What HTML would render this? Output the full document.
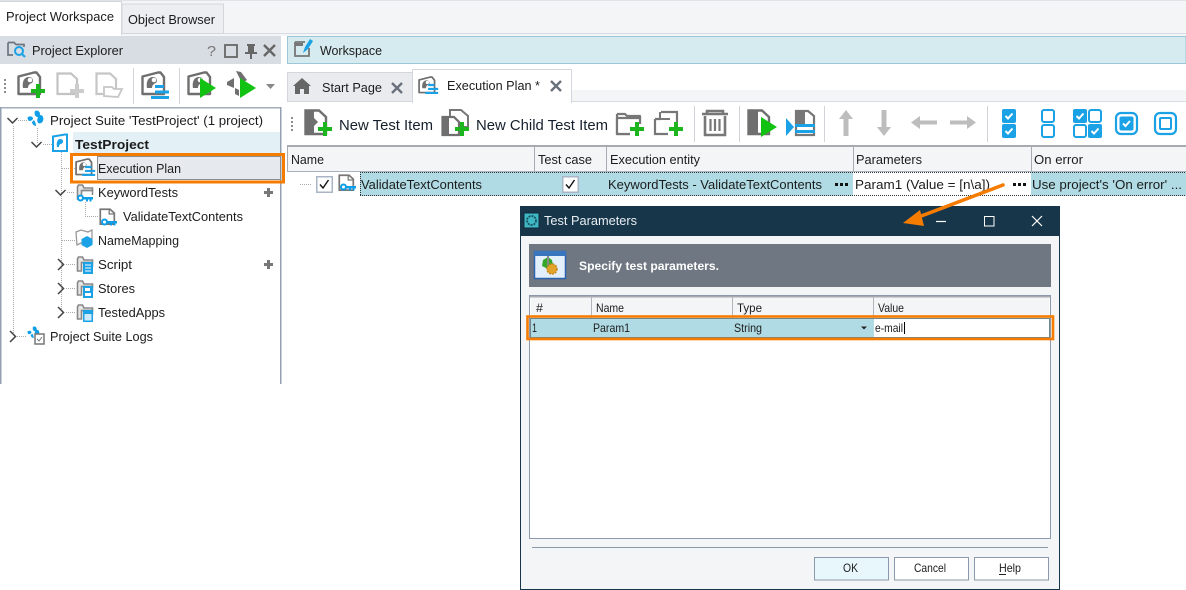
<!DOCTYPE html>
<html lang="en"><head><meta charset="utf-8"><title>Project Workspace</title>
<style>
html,body{margin:0;padding:0;background:#fff;width:1186px;height:590px;overflow:hidden}
svg{display:block}
text{font-family:"Liberation Sans",sans-serif;font-size:13px;fill:#1c1c1c}
.b{font-weight:bold}
.s{font-size:12px}
.big{font-size:15px;fill:#15202c}
</style></head><body>
<svg width="1186" height="590" viewBox="0 0 1186 590" xmlns="http://www.w3.org/2000/svg">
<defs>
<g id="plus"><path d="M5 0h4v5h5v4H9v5H5V9H0V5h5z" fill="#1db51d"/></g>
<g id="gplus"><path d="M5 0h4v5h5v4H9v5H5V9H0V5h5z" fill="#9b9b9b"/></g>
<g id="base"><path d="M1.500 5.500L17 1.500H19.500L23 6V23H1.500Z" fill="#fff" stroke="#6f6f6f" stroke-width="2.400" stroke-linejoin="round"/><path d="M6 17c-1-6 1-11 6-11 4 0 5 4 3 6-3 1-4 3-4 5z" fill="#6f6f6f"/><circle cx="13" cy="9" r="2.300" fill="#fff"/></g>
<g id="pg"><path d="M0 0L16 10L0 20Z" fill="#12c212"/></g>
<g id="bars"><path d="M4 0h9v3H4zM4 5.500h14v3H4zM0 11h18v3H0z" fill="#1ba1e6"/></g>
<g id="doc"><path d="M1.500 1.500H13L18 6V19H1.500Z" fill="#fff" stroke="#777" stroke-width="2"/><path d="M12 1v6h6" fill="none" stroke="#777" stroke-width="1.500"/></g>
<g id="folder"><path d="M1.500 4V16H5.500V7.500H16.500V5H8L6.500 2H2.500Z" fill="#e6e6e6" stroke="#888" stroke-width="1.600"/><path d="M5.500 7.500H16.500V12" fill="none" stroke="#888" stroke-width="1.500"/></g>
<g id="key"><circle cx="3.500" cy="4" r="2.500" fill="#fff" stroke="#0c9ee8" stroke-width="2"/><path d="M6 3h10v2.500h-1.500v2h-2v-2h-1.500v2h-2v-2H6z" fill="#0c9ee8"/></g>
<g id="chk"><rect x=".75" y=".75" width="15.500" height="15.500" fill="#fff" stroke="#aab6c6" stroke-width="1.500"/><path d="M4 8.500L7 12L12.500 4" fill="none" stroke="#111" stroke-width="1.400"/></g>
<g id="bc"><rect width="14" height="14" rx="2" fill="#1ba1e6"/><path d="M3.500 7L6 9.500L10.500 4.500" fill="none" stroke="#fff" stroke-width="2"/></g>
<g id="be"><rect x="1" y="1" width="12" height="12" rx="2" fill="#fff" stroke="#1ba1e6" stroke-width="2"/></g>
<g id="dots"><path d="M0 0h3v3H0zM5 0h3v3H5zM10 0h3v3h-3z" fill="#111"/></g>
<g id="suite"><path d="M8 1c2-1 5 0 5 3 0 2-1 3-3 3-2-1-3-3-2-6zM1 7c2-1 4-1 5 1 0 2-2 3-4 3-1-1-2-3-1-4zM13 5c3 0 4 3 3 6-1 2-3 3-5 2-1-2-1-4 0-6 1-1 1-2 2-2zM7 10c1 2 2 3 2 6-2 0-4-2-4-4z" fill="#0f9fe6"/></g>
</defs>

<!-- top tabs -->
<rect x="0" y="0" width="1186" height="36" fill="#f4f5f7"/>
<rect x="0" y="0" width="1186" height="1" fill="#dfe2e6"/>
<rect x="0" y="33" width="1186" height="1" fill="#d8dce2"/>
<rect x="122" y="4" width="101.500" height="29.500" fill="#eceef1" stroke="#d3d7dd"/>
<rect x="-1" y="1.500" width="122.500" height="33" fill="#fff" stroke="#d3d7dd"/>
<rect x="0" y="33" width="121" height="3" fill="#fff"/>
<text x="6" y="21" textLength="108" lengthAdjust="spacingAndGlyphs">Project Workspace</text>
<text x="128" y="24" textLength="87" lengthAdjust="spacingAndGlyphs">Object Browser</text>

<!-- left panel -->
<rect x="0" y="36" width="281" height="28" fill="#d8dde4"/>
<g fill="none" stroke="#6d7680" stroke-width="1.700">
<path d="M8 42.500H14L16 44.500H24V47M8 42.500V55H13"/>
<circle cx="19" cy="51" r="4" stroke="#1ba1e6" stroke-width="2"/><path d="M22 54L25 57" stroke="#1ba1e6" stroke-width="2"/>
</g>
<text x="32" y="55" textLength="91" lengthAdjust="spacingAndGlyphs">Project Explorer</text>
<text x="207" y="56" textLength="9" lengthAdjust="spacingAndGlyphs" style="font-size:15px;fill:#777">?</text>
<rect x="225" y="45" width="12" height="12" fill="none" stroke="#666" stroke-width="1.800"/>
<path d="M247 44h8v2h-1v6h3v2h-5v5h-2v-5h-5v-2h3v-6h-1z" fill="#666"/>
<path d="M264 45L275 56M275 45L264 56" stroke="#666" stroke-width="2.400"/>
<!-- left toolbar -->
<path d="M5 79v14" stroke="#8d8d8d" stroke-width="2" stroke-dasharray="2 2"/>
<use href="#base" x="17" y="71"/><use href="#plus" x="31" y="84"/>
<g opacity=".5"><path d="M57.500 73.500H71L77 79V94H57.500Z" fill="#fff" stroke="#888" stroke-width="2.200"/><use href="#gplus" x="70" y="84"/></g>
<g opacity=".55"><path d="M96.500 73.500H110L116 79V94H96.500Z" fill="#fff" stroke="#999" stroke-width="2.200"/><path d="M104 96V87H112L114 89H122L118 97Z" fill="#fff" stroke="#999" stroke-width="1.800"/></g>
<rect x="133" y="68" width="1" height="36" fill="#d0d4d9"/>
<use href="#base" x="141" y="71"/><use href="#bars" x="151" y="85"/>
<rect x="179" y="68" width="1" height="36" fill="#d0d4d9"/>
<use href="#base" x="187" y="71"/><use href="#pg" x="200" y="78"/>
<path d="M236 71l5 1 6 8-5 3zM227 82l7-4v10l-7-3zM235 88l4 2v6l-4-2z" fill="#6f6f6f"/><use href="#pg" x="240" y="78"/>
<path d="M266 84H275L270.500 89Z" fill="#888"/>

<!-- tree panel -->
<rect x="0" y="107" width="281" height="1.500" fill="#a3aebc"/>
<rect x="0" y="107" width="1.500" height="277" fill="#93a0b1"/>
<rect x="280" y="107" width="1.500" height="277" fill="#93a0b1"/>
<rect x="73" y="132" width="207" height="21" fill="#e3f1f6"/>
<rect x="97" y="156" width="184" height="24" fill="#e6e9ed"/>
<rect x="97.500" y="156.500" width="183" height="23" fill="none" stroke="#333" stroke-dasharray="1 1"/>
<g fill="none" stroke="#aaa" stroke-dasharray="1 1">
<path d="M13.500 126V336M18 120.500H27M37.500 128V144M43 144.500H52M61.500 152V312M62 168.500H75M67 192.500H75M85.500 202V216.500H98M62 240.500H75M66 264.500H75M66 288.500H75M66 312.500H75M17 336.500H27"/>
</g>
<g fill="none" stroke="#444" stroke-width="1.500">
<path d="M7.500 118L12.500 123L17.500 118M31.500 142L36.500 147L41.500 142M55.500 190L60.500 195L65.500 190"/>
<path d="M58 259L63.500 264.500L58 270M58 283L63.500 288.500L58 294M58 307L63.500 312.500L58 318M10 331L15.500 336.500L10 342"/>
</g>
<use href="#suite" x="27" y="110"/>
<text x="50" y="125" textLength="213" lengthAdjust="spacingAndGlyphs">Project Suite 'TestProject' (1 project)</text>
<path d="M53 136.500L65 134.500H67V151H53Z" fill="#fff" stroke="#1ba1e6" stroke-width="2"/><path d="M57 147c-1-5 1-8 3-8 4 0 4 4 1 5-1 0-2 1-2 3z" fill="#1ba1e6"/>
<text x="75" y="149" class="b" textLength="74" lengthAdjust="spacingAndGlyphs">TestProject</text>
<g transform="translate(75 158) scale(.72)"><use href="#base"/><use href="#bars" x="10" y="11"/></g>
<text x="98" y="173" textLength="83" lengthAdjust="spacingAndGlyphs">Execution Plan</text>
<use href="#folder" x="76" y="183"/><use href="#key" x="77" y="194"/>
<text x="98" y="197" textLength="80" lengthAdjust="spacingAndGlyphs">KeywordTests</text>
<path d="M267 188h3v3h3v3h-3v3h-3v-3h-3v-3h3z" fill="#777"/>
<g transform="translate(99 208) scale(.85)"><use href="#doc"/></g><use href="#key" x="101" y="218"/>
<text x="123" y="221" textLength="120" lengthAdjust="spacingAndGlyphs">ValidateTextContents</text>
<path d="M76 232L81 230L88 232L92 230V243L88 245L81 243L77 245Z" fill="#fff" stroke="#999" stroke-width="1.300"/><path d="M87 236L92.500 239V245L87 248L81.500 245V239Z" fill="#1ba1e6"/>
<text x="98" y="245" textLength="81" lengthAdjust="spacingAndGlyphs">NameMapping</text>
<use href="#folder" x="76" y="255"/><path d="M83 262h10v12H83z" fill="#1ba1e6"/><path d="M85 265h6M85 268h6M85 271h6" stroke="#fff"/>
<text x="98" y="269" textLength="34" lengthAdjust="spacingAndGlyphs">Script</text>
<path d="M267 260h3v3h3v3h-3v3h-3v-3h-3v-3h3z" fill="#777"/>
<use href="#folder" x="76" y="279"/><path d="M83 286h10v12H83z" fill="#1ba1e6"/><path d="M85 288h5v3h-5zM85 293h6v3h-6z" fill="#fff"/>
<text x="98" y="293" textLength="37" lengthAdjust="spacingAndGlyphs">Stores</text>
<use href="#folder" x="76" y="303"/><path d="M83 310h10v12H83z" fill="#1ba1e6"/><path d="M84.500 314h7v6.500h-7z" fill="#cfeafa"/>
<text x="98" y="317" textLength="67" lengthAdjust="spacingAndGlyphs">TestedApps</text>
<g transform="translate(27 326) scale(.75)"><use href="#suite"/></g>
<rect x="35" y="334" width="9" height="10" fill="#fff" stroke="#777" stroke-width="1.500"/><path d="M37 339L39 341L42 337" fill="none" stroke="#777"/>
<text x="50" y="341" textLength="103" lengthAdjust="spacingAndGlyphs">Project Suite Logs</text>

<!-- workspace -->
<rect x="287.500" y="36.500" width="898.500" height="27" fill="#d5ebef" stroke="#9cc7d6"/>
<path d="M295 42H305M295 42V56H309V48" fill="none" stroke="#777" stroke-width="1.800"/><path d="M295 44.500h8" stroke="#777" stroke-width="3"/>
<path d="M303 53L305 47L310 39L313 41L308 49Z" fill="#1ba1e6"/>
<text x="320" y="55" textLength="62" lengthAdjust="spacingAndGlyphs">Workspace</text>
<rect x="287" y="64" width="899" height="38" fill="#fff"/>
<rect x="572" y="90" width="614" height="11" fill="#f4f5f7"/>
<rect x="287" y="101" width="899" height="1" fill="#d8dce2"/>
<rect x="287.500" y="72.500" width="125" height="29" fill="#e9ebef" stroke="#d3d7dd"/>
<rect x="412.500" y="69.500" width="159" height="33" fill="#fff" stroke="#d3d7dd"/>
<rect x="413" y="101" width="158" height="3" fill="#fff"/>
<path d="M293 86L302 78L311 86H309V94H304V89H300V94H295V86Z" fill="#666"/>
<text x="322" y="92" textLength="60" lengthAdjust="spacingAndGlyphs">Start Page</text>
<path d="M392 83L402 93M402 83L392 93" stroke="#69727c" stroke-width="2.400"/>
<g transform="translate(418 76) scale(.72)"><use href="#base"/><use href="#bars" x="10" y="11"/></g>
<text x="447" y="90" textLength="93" lengthAdjust="spacingAndGlyphs">Execution Plan *</text>
<path d="M551 81L561 91M561 81L551 91" stroke="#69727c" stroke-width="2.400"/>

<!-- right toolbar -->
<path d="M292 117v14" stroke="#8d8d8d" stroke-width="2" stroke-dasharray="2 2"/>
<path d="M305.500 110.500H319L326 117V134H305.500Z" fill="#fff" stroke="#6f6f6f" stroke-width="2.400"/><path d="M306 111H314V118L318 122L314 126V134H306Z" fill="#6f6f6f"/><use href="#plus" x="318" y="122"/>
<text x="339" y="130" class="big" textLength="94" lengthAdjust="spacingAndGlyphs">New Test Item</text>
<path d="M450 110H461L468 116V127H450Z" fill="#fff" stroke="#777" stroke-width="2"/><path d="M442.500 117H454L459 122V135H442.500Z" fill="#fff" stroke="#6f6f6f" stroke-width="2.200"/><path d="M443 117H449V135H443Z" fill="#6f6f6f"/><use href="#plus" x="455" y="122"/>
<text x="476" y="130" class="big" textLength="132" lengthAdjust="spacingAndGlyphs">New Child Test Item</text>
<path d="M617 114V134H630M617 114H625L627 116H640V123" fill="#fff" stroke="#777" stroke-width="2.200" stroke-linejoin="round"/><path d="M618 117H640V124H630V133H618Z" fill="#fff"/><path d="M617 118H640V124M617 118V134H630" fill="none" stroke="#777" stroke-width="2.200"/><use href="#plus" x="630" y="122"/>
<path d="M655 119V134H668M655 119H661M661 112H677V122" fill="none" stroke="#777" stroke-width="2.200"/><path d="M660 112V119H670" fill="none" stroke="#777" stroke-width="2"/><use href="#plus" x="669" y="122"/>
<rect x="694" y="106" width="1" height="36" fill="#d0d4d9"/>
<path d="M702 114H728M707 114V111H723V114M705 116V135H725V116" fill="none" stroke="#777" stroke-width="2.600"/><path d="M710.500 119V131M715 119V131M719.500 119V131" stroke="#777" stroke-width="2.200"/>
<rect x="739" y="106" width="1" height="36" fill="#d0d4d9"/>
<path d="M748.500 110.500H762L769 117V134H748.500Z" fill="#fff" stroke="#6f6f6f" stroke-width="2.400"/><path d="M749 111H758V134H749Z" fill="#6f6f6f"/><use href="#pg" x="761" y="117"/>
<path d="M796 111H808L814 116V135H796Z" fill="#fff" stroke="#777" stroke-width="2.200"/><path d="M796 111H805V124H796Z" fill="#777"/><path d="M786 118L794 127L786 136Z" fill="#1ba1e6"/><path d="M795 124H815V127H795ZM795 130H815V133H795Z" fill="#1ba1e6"/>
<rect x="824" y="106" width="1" height="36" fill="#d0d4d9"/>
<g fill="#bdbdbd">
<path d="M846 110L853 119H848.500V136H843.500V119H839Z"/>
<path d="M884 136L891 127H886.500V110H881.500V127H877Z"/>
<path d="M911 122.500L920 116V120.500H937V124.500H920V129Z"/>
<path d="M976 122.500L967 116V120.500H950V124.500H967V129Z"/>
</g>
<rect x="987" y="106" width="1" height="36" fill="#d0d4d9"/>
<use href="#bc" x="1002" y="109"/><use href="#bc" x="1002" y="124"/>
<use href="#be" x="1041" y="109"/><use href="#be" x="1041" y="124"/>
<use href="#bc" x="1073" y="109"/><use href="#be" x="1088" y="109"/><use href="#be" x="1073" y="124"/><use href="#bc" x="1088" y="124"/>
<rect x="1116" y="113" width="21" height="21" rx="5" fill="#fff" stroke="#1ba1e6" stroke-width="2.200"/><use href="#bc" x="1119.500" y="116.500"/>
<rect x="1155" y="113" width="21" height="21" rx="5" fill="#fff" stroke="#1ba1e6" stroke-width="2.200"/><rect x="1160" y="118" width="11" height="11" rx="1" fill="#fff" stroke="#1ba1e6" stroke-width="2"/>

<!-- grid -->
<rect x="287" y="146" width="899" height="25" fill="#f4f5f7"/>
<rect x="287" y="145" width="899" height="2" fill="#a7abb1"/>
<rect x="287" y="171" width="899" height="1" fill="#aab2bc"/>
<rect x="287" y="146" width="1" height="26" fill="#a7abb1"/>
<path d="M534.500 147V171M606.500 147V171M853.500 147V171M1031.500 147V171" stroke="#a7abb1"/>
<text x="291" y="164" textLength="33" lengthAdjust="spacingAndGlyphs">Name</text>
<text x="538" y="164" textLength="54" lengthAdjust="spacingAndGlyphs">Test case</text>
<text x="610" y="164" textLength="90" lengthAdjust="spacingAndGlyphs">Execution entity</text>
<text x="856" y="164" textLength="66" lengthAdjust="spacingAndGlyphs">Parameters</text>
<text x="1034" y="164" textLength="49" lengthAdjust="spacingAndGlyphs">On error</text>
<rect x="360" y="172" width="826" height="24" fill="#b0dbe4"/>
<rect x="853" y="172" width="178" height="24" fill="#fff"/>
<path d="M360 172.500H1186M360 195.500H1186M360.500 172V196" stroke="#333" stroke-dasharray="1 1" fill="none"/>
<path d="M300 184.500H311" stroke="#aaa" stroke-dasharray="1 1"/>
<use href="#chk" x="316" y="176"/>
<g transform="translate(338 174) scale(.85)"><use href="#doc"/></g><use href="#key" x="340" y="183"/>
<text x="361" y="189" textLength="121" lengthAdjust="spacingAndGlyphs">ValidateTextContents</text>
<use href="#chk" x="562" y="176"/>
<text x="608" y="189" textLength="214" lengthAdjust="spacingAndGlyphs">KeywordTests - ValidateTextContents</text>
<use href="#dots" x="835" y="183"/>
<text x="855" y="189" textLength="135" lengthAdjust="spacingAndGlyphs">Param1 (Value = [n\a])</text>
<use href="#dots" x="1013" y="183"/>
<text x="1032" y="189" textLength="150" lengthAdjust="spacingAndGlyphs">Use project's 'On error' ...</text>

<!-- dialog -->
<rect x="520.500" y="206.500" width="539" height="383" fill="#f3f5f7" stroke="#18364a"/>
<rect x="520" y="206" width="540" height="30" fill="#18364a"/>
<rect x="524" y="213" width="15" height="15" fill="#3fb8c4" stroke="#0f2a3a"/>
<circle cx="531.500" cy="220.500" r="4.500" fill="none" stroke="#17505e" stroke-width="1.800" stroke-dasharray="2 1"/>
<text x="544" y="225" textLength="93" lengthAdjust="spacingAndGlyphs" style="fill:#e8eef2">Test Parameters</text>
<path d="M936 221.500H946" stroke="#fff" stroke-width="1.200"/>
<rect x="984.500" y="216.500" width="9.500" height="9.500" fill="none" stroke="#fff"/>
<path d="M1032 216L1042 226M1042 216L1032 226" stroke="#fff" stroke-width="1.200"/>
<rect x="529" y="244" width="522" height="43" fill="#6f7782"/>
<rect x="534.500" y="251.500" width="31" height="27" fill="#e3f0fb" stroke="#2d62ae" stroke-width="1.500"/>
<rect x="534" y="251" width="32" height="5" fill="#3a76c0"/>
<path d="M543 260l5-3 4 3 1 5-5 4-6-3z" fill="#37a72a"/>
<circle cx="552" cy="269" r="5" fill="#e2a32a" stroke="#c8861a" stroke-width="1.500" stroke-dasharray="2 1"/>
<rect x="547" y="256" width="2" height="9" fill="#888"/>
<text x="579" y="270" class="b" textLength="140" lengthAdjust="spacingAndGlyphs" style="fill:#fff;font-size:12px">Specify test parameters.</text>
<rect x="529.500" y="295.500" width="521" height="243" fill="#fff" stroke="#8c99aa"/>
<rect x="531" y="297" width="518" height="21" fill="#f4f5f7"/>
<rect x="530" y="296" width="520" height="1.500" fill="#a7abb1"/>
<path d="M591.500 297V318M732.500 297V318M873.500 297V318" stroke="#b0b5bb"/>
<text x="536" y="312" class="s" textLength="7" lengthAdjust="spacingAndGlyphs">#</text>
<text x="596" y="312" class="s" textLength="28" lengthAdjust="spacingAndGlyphs">Name</text>
<text x="737" y="312" class="s" textLength="25" lengthAdjust="spacingAndGlyphs">Type</text>
<text x="878" y="312" class="s" textLength="26" lengthAdjust="spacingAndGlyphs">Value</text>
<rect x="530" y="318" width="520" height="20" fill="#b0dbe4"/>
<rect x="874" y="319" width="175" height="18" fill="#fff"/>
<rect x="530.500" y="318.500" width="519" height="19" fill="none" stroke="#333" stroke-dasharray="1 1"/>
<text x="532" y="332" class="s" textLength="5" lengthAdjust="spacingAndGlyphs">1</text>
<text x="593" y="332" class="s" textLength="37" lengthAdjust="spacingAndGlyphs">Param1</text>
<text x="734" y="332" class="s" textLength="28" lengthAdjust="spacingAndGlyphs">String</text>
<path d="M861 326.500H867L864 329.500Z" fill="#222"/>
<text x="875" y="332" class="s" textLength="28" lengthAdjust="spacingAndGlyphs">e-mail</text>
<rect x="904" y="322" width="1" height="12" fill="#000"/>
<rect x="527.500" y="316.500" width="525.500" height="22.500" fill="none" stroke="#f57c00" stroke-width="2.600"/>
<rect x="532" y="547" width="516" height="1" fill="#8c99aa"/>
<rect x="814.500" y="557.500" width="74" height="22.500" fill="#e8f7fc" stroke="#8c99aa"/>
<rect x="894.500" y="557.500" width="74" height="22.500" fill="#fff" stroke="#8c99aa"/>
<rect x="974.500" y="557.500" width="74" height="22.500" fill="#fff" stroke="#8c99aa"/>
<text x="843" y="572" class="s" textLength="15" lengthAdjust="spacingAndGlyphs">OK</text>
<text x="914" y="572" class="s" textLength="32" lengthAdjust="spacingAndGlyphs">Cancel</text>
<text x="999" y="572" class="s" textLength="22" lengthAdjust="spacingAndGlyphs">Help</text>
<rect x="999" y="574" width="7" height="1" fill="#222"/>

<!-- orange annotations -->
<rect x="71.500" y="154.500" width="212" height="27.500" fill="none" stroke="#f57c00" stroke-width="3"/>
<path d="M1003 185L916 218" stroke="#f57c00" stroke-width="3.600" stroke-linecap="round"/>
<path d="M903 223L920 210L924 226Z" fill="#f57c00"/>
</svg>
</body></html>
